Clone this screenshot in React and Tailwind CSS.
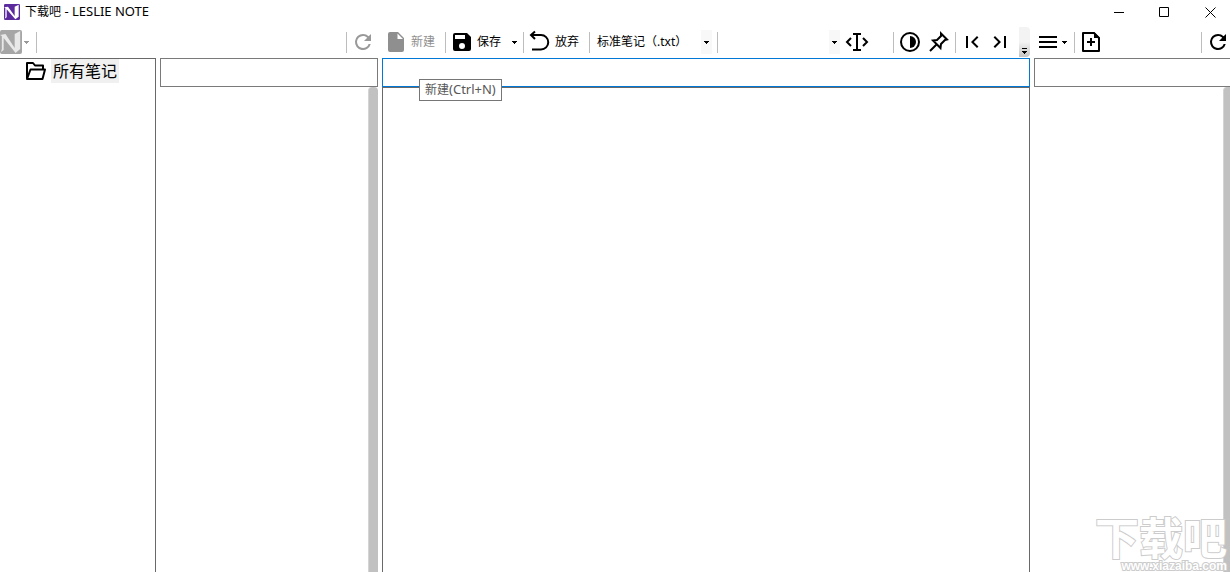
import { useState } from 'react';

const noteTypes = ['标准笔记（.txt）'];

function Icon({ children }) {
  return (
    <svg viewBox="0 0 24 24" className="h-6 w-6 shrink-0" fill="currentColor" aria-hidden="true">
      {children}
    </svg>
  );
}

function Caret() {
  return (
    <svg viewBox="0 0 5 3" className="h-[3px] w-[5px] shrink-0" fill="currentColor" shapeRendering="crispEdges" aria-hidden="true">
      <path d="M0 0h5v1H4v1H3v1H2V2H1V1H0z" />
    </svg>
  );
}

function RefreshIcon() {
  return (
    <Icon>
      <path d="M17.65 6.35A7.96 7.96 0 0 0 12 4a8 8 0 1 0 7.73 10h-2.08A6 6 0 1 1 12 6c1.66 0 3.14.69 4.22 1.78L13 11h7V4z" />
    </Icon>
  );
}

function Separator() {
  return <div className="h-[21px] w-px shrink-0 bg-[#bdbdbd]" />;
}

function LogoMark({ className, back, front }) {
  return (
    <svg viewBox="0 0 24 24" preserveAspectRatio="none" className={className} aria-hidden="true">
      <rect width="24" height="24" rx="2" fill={back} />
      <path d="M0 5l6-1 10 14V4l6-3v18l-5 4L4 8v12l-3 2 1-3V6z" fill={front} />
    </svg>
  );
}

function Dropdown({ label, options, className }) {
  return (
    <div className={className}>
      <select aria-label={label} className="h-6 w-full appearance-none bg-transparent pl-[7px] text-xs outline-none">
        {options.map((option) => (
          <option key={option}>{option}</option>
        ))}
      </select>
      <span className="pointer-events-none absolute inset-y-0 right-[5px] flex w-[11px] items-center justify-center bg-[#f8f8f8]">
        <Caret />
      </span>
    </div>
  );
}

function TitleBar() {
  return (
    <header className="-mr-[3px] flex h-6 items-center pl-1">
      <LogoMark className="h-4 w-4" back="#5b2a9d" front="#ffffff" />
      <h1 className="ml-[5px] text-xs">
        下载吧<span className="text-[13px]"> - LESLIE NOTE</span>
      </h1>
      <div className="ml-auto flex">
        <button type="button" aria-label="最小化" className="flex h-6 w-[46px] items-center justify-center">
          <svg viewBox="0 0 11 11" className="h-[11px] w-[11px]" stroke="currentColor" aria-hidden="true">
            <path d="M1 5.500h10" />
          </svg>
        </button>
        <button type="button" aria-label="最大化" className="flex h-6 w-[46px] items-center justify-center">
          <svg viewBox="0 0 11 11" className="h-[11px] w-[11px]" fill="none" stroke="currentColor" aria-hidden="true">
            <path d="M.5 .5h9v9h-9z" />
          </svg>
        </button>
        <button type="button" aria-label="关闭" className="flex h-6 w-[46px] items-center justify-center">
          <svg viewBox="0 0 11 11" className="h-[11px] w-[11px]" stroke="currentColor" aria-hidden="true">
            <path d="M.5 .5l10 10M10.500 .5l-10 10" />
          </svg>
        </button>
      </div>
    </header>
  );
}

function LeftToolbar() {
  return (
    <div className="flex h-[34px] items-center pt-0.5 text-[#999999]">
      <button type="button" aria-label="Leslie Note" className="flex w-9 items-center gap-0.5">
        <LogoMark className="h-6 w-[22px]" back="#a6a6a6" front="#e8e8e8" />
        <Caret />
      </button>
      <Separator />
      <div className="ml-auto flex items-center gap-1 pr-[3px]">
        <Separator />
        <button type="button" aria-label="刷新">
          <RefreshIcon />
        </button>
      </div>
    </div>
  );
}

function EditorToolbar() {
  return (
    <div className="flex h-[34px] items-center pt-0.5 text-xs">
      <button type="button" disabled className="flex items-center gap-[3px] pr-2.5 pl-0.5 text-[#8f8f8f]">
        <Icon>
          <path d="M6 2a2 2 0 0 0-2 2v16a2 2 0 0 0 2 2h12a2 2 0 0 0 2-2V8l-6-6zm7.500 7V3.500L19 9z" />
        </Icon>
        新建
      </button>
      <Separator />
      <button type="button" className="flex items-center gap-[3px] pl-1">
        <Icon>
          <path d="M17 3H5a2 2 0 0 0-2 2v14a2 2 0 0 0 2 2h14a2 2 0 0 0 2-2V7zm-5 16a3 3 0 1 1 0-6 3 3 0 0 1 0 6zm3-10H5V5h10z" />
        </Icon>
        保存
      </button>
      <button type="button" aria-label="保存选项" className="flex h-6 w-[22px] items-center pl-[11px]">
        <Caret />
      </button>
      <Separator />
      <button type="button" className="flex items-center gap-[3px] pr-2.5 pl-1">
        <Icon>
          <path d="M7 1.500L3 5l4 4M3 5h10a7 7 0 0 1 0 14.500H4" fill="none" stroke="currentColor" strokeWidth="2" />
        </Icon>
        放弃
      </button>
      <Separator />
      <Dropdown label="笔记类型" options={noteTypes} className="relative w-[127px]" />
      <Separator />
      <Dropdown label="样式" options={['']} className="relative w-[127px]" />
      <button type="button" aria-label="自动换行" className="mr-6 flex">
        <Icon>
          <path d="M6 8l-4 4 4 4M18 8l4 4-4 4" fill="none" stroke="currentColor" strokeWidth="2" />
          <path d="M8 3h8v2h-3v14h3v2H8v-2h3V5H8z" />
        </Icon>
      </button>
      <Separator />
      <div className="flex gap-[5px] pr-1 pl-1">
        <button type="button" aria-label="主题">
          <Icon>
            <circle cx="12" cy="12" r="9" fill="none" stroke="currentColor" strokeWidth="2" />
            <path d="M12 6a6 6 0 0 1 0 12z" />
          </Icon>
        </button>
        <button type="button" aria-label="置顶">
          <Icon>
            <path d="M14 3.500l6 6-2 .5-4 4-.5 4L6 10.500l4-.5 4-4zM9.500 14.500L3 21" fill="none" stroke="currentColor" strokeWidth="2" />
          </Icon>
        </button>
      </div>
      <Separator />
      <div className="flex gap-1 pl-1">
        <button type="button" aria-label="上一条">
          <Icon>
            <path d="M6 6h2v12H6zM18.410 16.590L13.820 12l4.590-4.590L17 6l-6 6 6 6z" />
          </Icon>
        </button>
        <button type="button" aria-label="下一条">
          <Icon>
            <path d="M5.590 7.410L10.180 12l-4.590 4.590L7 18l6-6-6-6zM16 6h2v12h-2z" />
          </Icon>
        </button>
      </div>
      <button
        type="button"
        aria-label="更多"
        className="mb-px ml-auto flex h-[30px] w-[11px] flex-col items-center justify-end gap-0.5 self-end rounded-r-sm bg-linear-to-b from-[#f3f3f3] from-50% to-[#c4c4c4] pb-[3px]"
      >
        <span className="h-px w-[5px] bg-black" />
        <Caret />
      </button>
    </div>
  );
}

function SideToolbar() {
  return (
    <div className="flex h-[34px] items-center pt-0.5">
      <button type="button" aria-label="菜单" className="flex w-10 items-center gap-0.5 pl-0.5">
        <Icon>
          <path d="M3 6h18v2H3zM3 11h18v2H3zM3 16h18v2H3z" />
        </Icon>
        <Caret />
      </button>
      <Separator />
      <button type="button" aria-label="添加" className="ml-1">
        <Icon>
          <path d="M4 3h11l5 5v13H4z" fill="none" stroke="currentColor" strokeWidth="2" strokeLinejoin="round" />
          <path d="M15 2v6h6zM11 8h2v3h3v2h-3v3h-2v-3H8v-2h3z" />
        </Icon>
      </button>
      <div className="ml-auto flex items-center gap-1">
        <Separator />
        <button type="button" aria-label="刷新">
          <RefreshIcon />
        </button>
      </div>
    </div>
  );
}

function Watermark() {
  return (
    <div className="pointer-events-none absolute right-[3px] bottom-0 font-bold text-white [-webkit-text-stroke:2px_#cccccc] [paint-order:stroke_fill]">
      <div className="text-[44px] leading-[46px]">下载吧</div>
      <div className="text-right font-['Liberation_Sans'] text-xs leading-[11px]">www.xiazaiba.com</div>
    </div>
  );
}

export default function App() {
  const [title, setTitle] = useState('');
  const [body, setBody] = useState('');

  return (
    <div className="relative flex h-screen flex-col overflow-hidden bg-white font-['Noto_Sans','Noto_Sans_CJK_SC',sans-serif] text-black">
      <TitleBar />
      <div className="flex min-h-0 flex-1 gap-1">
        <section className="flex w-[378px] shrink-0 flex-col">
          <LeftToolbar />
          <div className="flex flex-1 gap-1">
            <nav className="w-[156px] border-t border-r border-[#696969] pl-6">
              <a href="#all" className="flex items-center gap-[3px]">
                <Icon>
                  <path d="M3 19.500V4h6l2 2.500h8V10M3 20L6.500 10.500H21l-2.500 9.500z" fill="none" stroke="currentColor" strokeWidth="2" strokeLinejoin="round" />
                </Icon>
                <span className="bg-[#f0f0f0] px-0.5 text-base leading-6">所有笔记</span>
              </a>
            </nav>
            <div className="flex flex-1 flex-col">
              <input aria-label="搜索笔记" className="h-[29px] w-full border border-[#7a7a7a] px-2 text-sm outline-none" />
              <div className="ml-auto w-2.5 flex-1 rounded-t border-l border-[#d4d4d4] bg-[#c1c1c1]" />
            </div>
          </div>
        </section>

        <main className="flex min-w-0 flex-1 flex-col">
          <EditorToolbar />
          <div className="relative flex flex-1 flex-col">
            <input
              aria-label="标题"
              value={title}
              onChange={(event) => setTitle(event.target.value)}
              className="h-[29px] w-full border border-[#0078d7] px-2 text-sm outline-none"
            />
            <textarea
              aria-label="正文"
              value={body}
              onChange={(event) => setBody(event.target.value)}
              className="flex-1 resize-none border-x border-t border-[#696969] p-2 text-sm outline-none"
            />
            <div
              role="tooltip"
              className="absolute top-[21px] left-[37px] flex h-[22px] items-center border border-[#767676] bg-white px-[5px] text-xs text-[#575757]"
            >
              新建<span className="text-[13px]">(Ctrl+N)</span>
            </div>
          </div>
        </main>

        <aside className="flex w-[196px] shrink-0 flex-col">
          <SideToolbar />
          <input aria-label="搜索附件" className="h-[29px] w-full border-y border-l border-[#7a7a7a] px-2 text-sm outline-none" />
          <div className="ml-auto w-[7px] flex-1 rounded-tl border-l border-[#d4d4d4] bg-[#c1c1c1]" />
        </aside>
      </div>
      <Watermark />
    </div>
  );
}
